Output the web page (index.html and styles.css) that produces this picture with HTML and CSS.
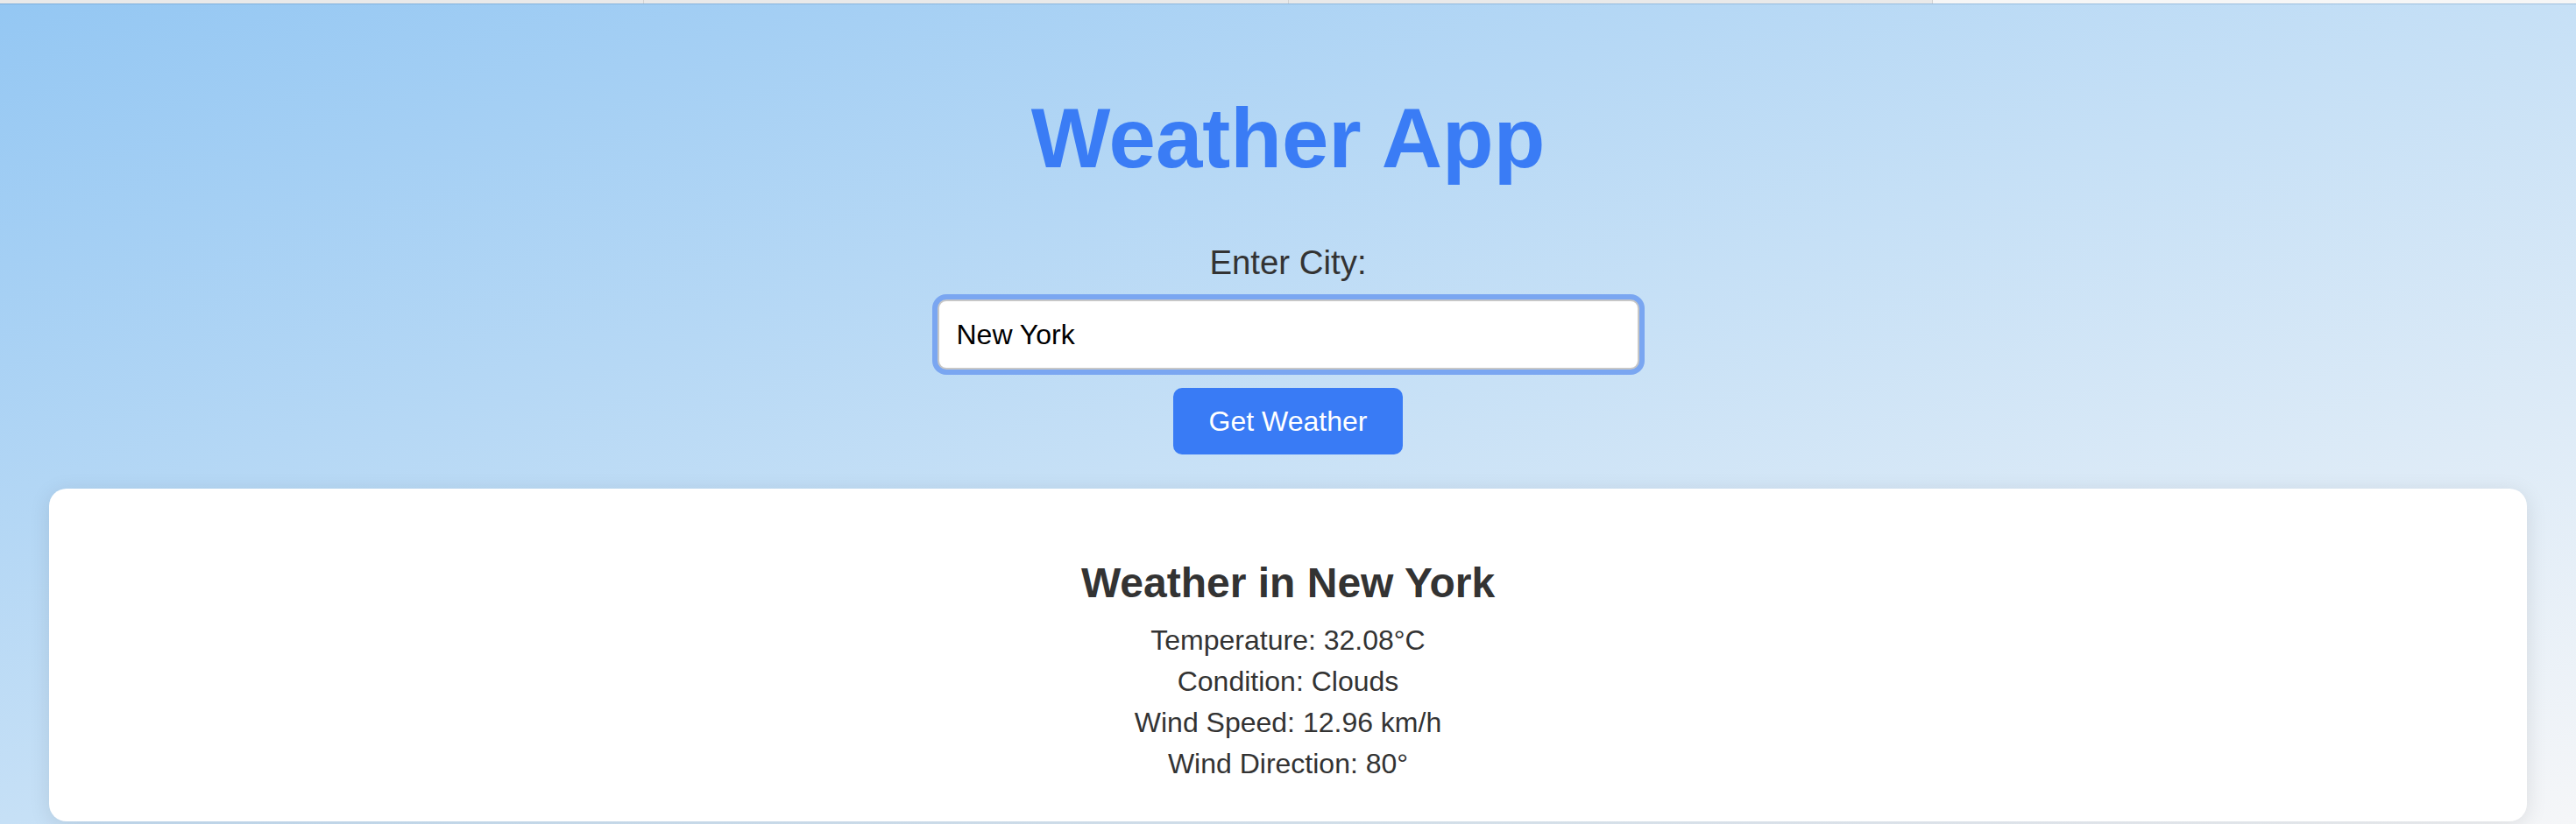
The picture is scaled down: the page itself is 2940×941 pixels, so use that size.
FILE: index.html
```html
<!DOCTYPE html>
<html lang="en">
<head>
<meta charset="utf-8">
<title>Weather App</title>
<link rel="stylesheet" href="styles.css">
</head>
<body>
  <div class="tabstrip">
    <div class="tab"></div>
    <div class="tab"></div>
    <div class="tab"></div>
    <div class="tab tab-active"></div>
  </div>
  <main class="page">
    <h1 class="title">Weather App</h1>
    <form class="search">
      <label class="search-label" for="city">Enter City:</label>
      <input class="search-input" id="city" type="text" value="New York">
      <button class="search-button" type="button">Get Weather</button>
    </form>
    <section class="card">
      <h2 class="card-title">Weather in New York</h2>
      <p class="card-line">Temperature: 32.08°C</p>
      <p class="card-line">Condition: Clouds</p>
      <p class="card-line">Wind Speed: 12.96 km/h</p>
      <p class="card-line">Wind Direction: 80°</p>
    </section>
  </main>
</body>
</html>
```

FILE: styles.css
```css
html, body {
  margin: 0;
  padding: 0;
  min-height: 100%;
}

body {
  font-family: "Liberation Sans", Arial, Helvetica, sans-serif;
  font-size: 32px;
  color: #333333;
  background: linear-gradient(to bottom right, #94c7f3 0%, #c6e0f6 50%, #f5f6f8 100%);
  background-attachment: fixed;
  min-height: 941px;
  overflow: hidden;
}

.tabstrip {
  display: flex;
  height: 4px;
  border-bottom: 1px solid rgba(60, 110, 160, 0.28);
}

.tab {
  flex: 1;
  background: #e9e9e9;
  border-right: 1px solid #d2d2d2;
}

.tab-active {
  background: #f6f6f6;
  border-right: none;
}

.page {
  padding: 35px 56px 0;
  text-align: center;
}

.title {
  font-size: 96px;
  font-weight: bold;
  color: #3a7cf5;
  margin: 63px 0 65px;
  line-height: normal;
}

.search {
  display: flex;
  flex-direction: column;
  align-items: center;
}

.search-label {
  display: block;
  font-size: 38.4px;
  color: #333333;
  margin-bottom: 20px;
}

.search-input {
  box-sizing: border-box;
  width: 801px;
  height: 80px;
  padding: 0 20px;
  font-family: "Liberation Sans", Arial, Helvetica, sans-serif;
  font-size: 32px;
  color: #000000;
  background: #ffffff;
  border: 2px solid #c7c7c7;
  border-radius: 10px;
  box-shadow: 0 0 0 6px #7aa6f1;
  outline: none;
}

.search-button {
  margin-top: 21px;
  width: 262px;
  height: 76px;
  font-family: "Liberation Sans", Arial, Helvetica, sans-serif;
  font-size: 32px;
  color: #ffffff;
  background: #397bf5;
  border: none;
  border-radius: 10px;
  padding: 0;
}

.card {
  margin-top: 39px;
  background: #ffffff;
  border-radius: 20px;
  padding: 40px;
  height: 380px;
  box-sizing: border-box;
  box-shadow: 0 4px 24px rgba(0, 0, 0, 0.1);
}

.card-title {
  font-size: 48px;
  font-weight: bold;
  color: #333333;
  margin: 40px 0 20px;
  line-height: normal;
}

.card-line {
  margin: 10px 0;
  line-height: normal;
  color: #333333;
}
```
